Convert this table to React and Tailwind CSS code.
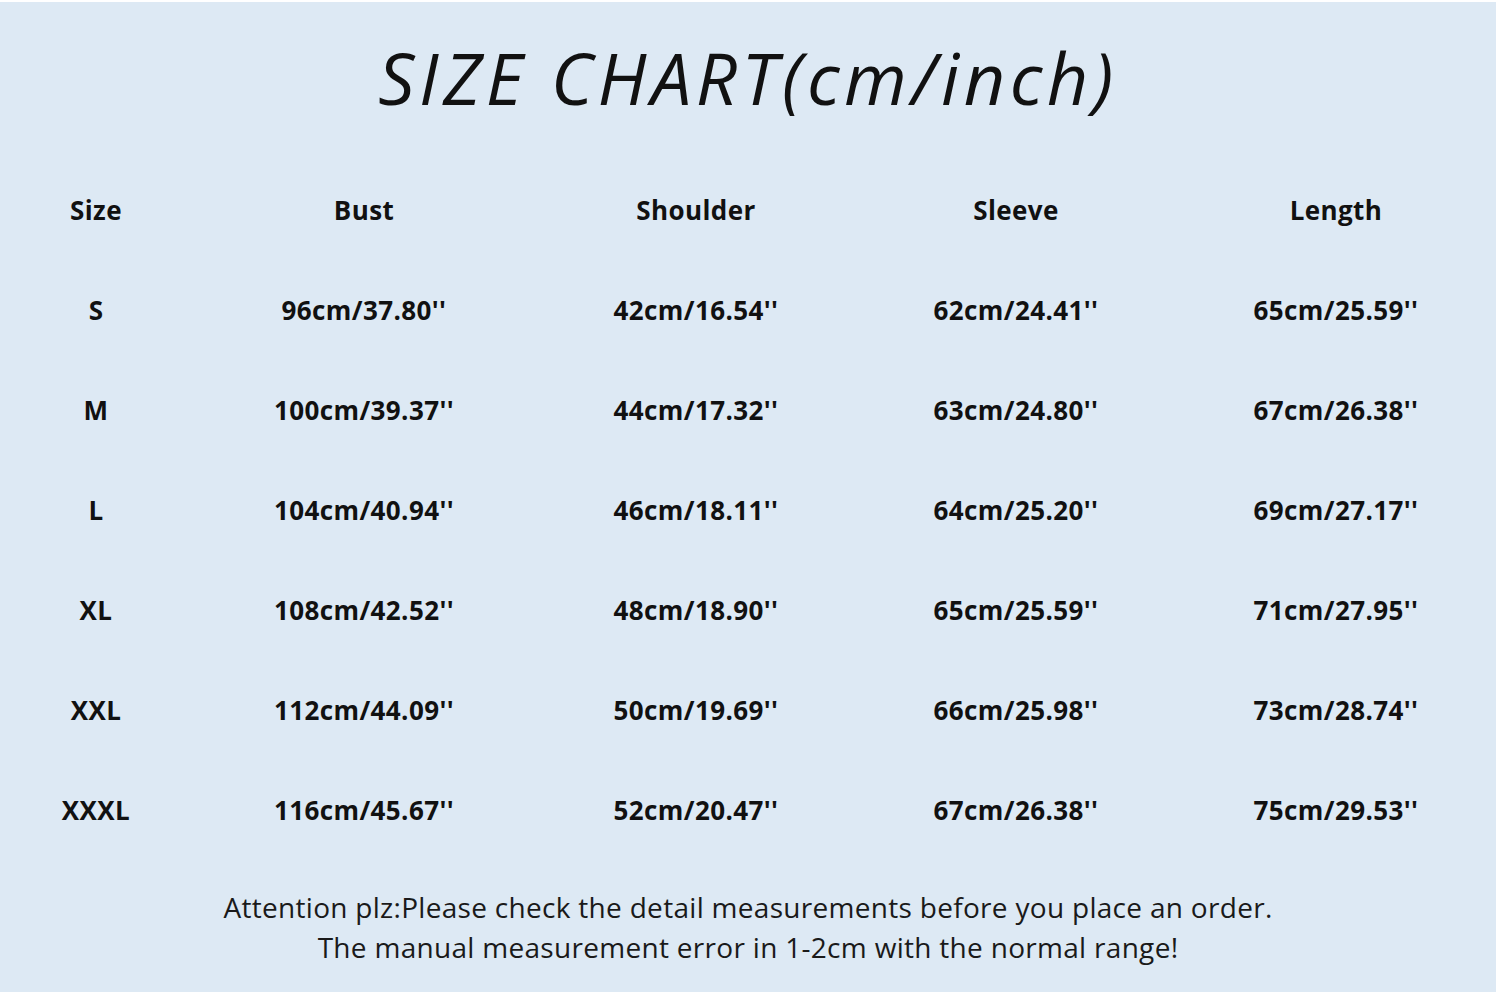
const headers = ['Size', 'Bust', 'Shoulder', 'Sleeve', 'Length'];

const rows = [
  ['S', "96cm/37.80''", "42cm/16.54''", "62cm/24.41''", "65cm/25.59''"],
  ['M', "100cm/39.37''", "44cm/17.32''", "63cm/24.80''", "67cm/26.38''"],
  ['L', "104cm/40.94''", "46cm/18.11''", "64cm/25.20''", "69cm/27.17''"],
  ['XL', "108cm/42.52''", "48cm/18.90''", "65cm/25.59''", "71cm/27.95''"],
  ['XXL', "112cm/44.09''", "50cm/19.69''", "66cm/25.98''", "73cm/28.74''"],
  ['XXXL', "116cm/45.67''", "52cm/20.47''", "67cm/26.38''", "75cm/29.53''"]
];

const gridCols = 'grid grid-cols-[192px_344px_320px_320px_320px]';

export default function App() {
  return (
    <div className="h-[996px] w-[1500px] bg-white pt-[2px]">
      <div className="flex h-[990px] w-[1496px] flex-col bg-[#dde9f4] text-[#111]">
        <div className="flex h-[158px] items-center justify-center pb-[8px]">
          <h1 className="font-['Open_Sans',sans-serif] text-[72px] font-normal italic tracking-[4.5px] text-[#111]">
            SIZE CHART(cm/inch)
          </h1>
        </div>

        <div className="font-['Open_Sans',sans-serif] text-[26px] font-bold tracking-[0.4px]">
          <div className={`${gridCols} h-[100px] items-center text-center`}>
            {headers.map((h) => (
              <div key={h}>{h}</div>
            ))}
          </div>
          {rows.map((row) => (
            <div key={row[0]} className={`${gridCols} h-[100px] items-center text-center`}>
              {row.map((cell, i) => (
                <div key={i}>{cell}</div>
              ))}
            </div>
          ))}
        </div>

        <div className="mt-[27px] text-center font-['Open_Sans',sans-serif] text-[28px] leading-[40px] tracking-[0.3px] text-[#1a1a1a]">
          <p>Attention plz:Please check the detail measurements before you place an order.</p>
          <p>The manual measurement error in 1-2cm with the normal range!</p>
        </div>
      </div>
    </div>
  );
}
